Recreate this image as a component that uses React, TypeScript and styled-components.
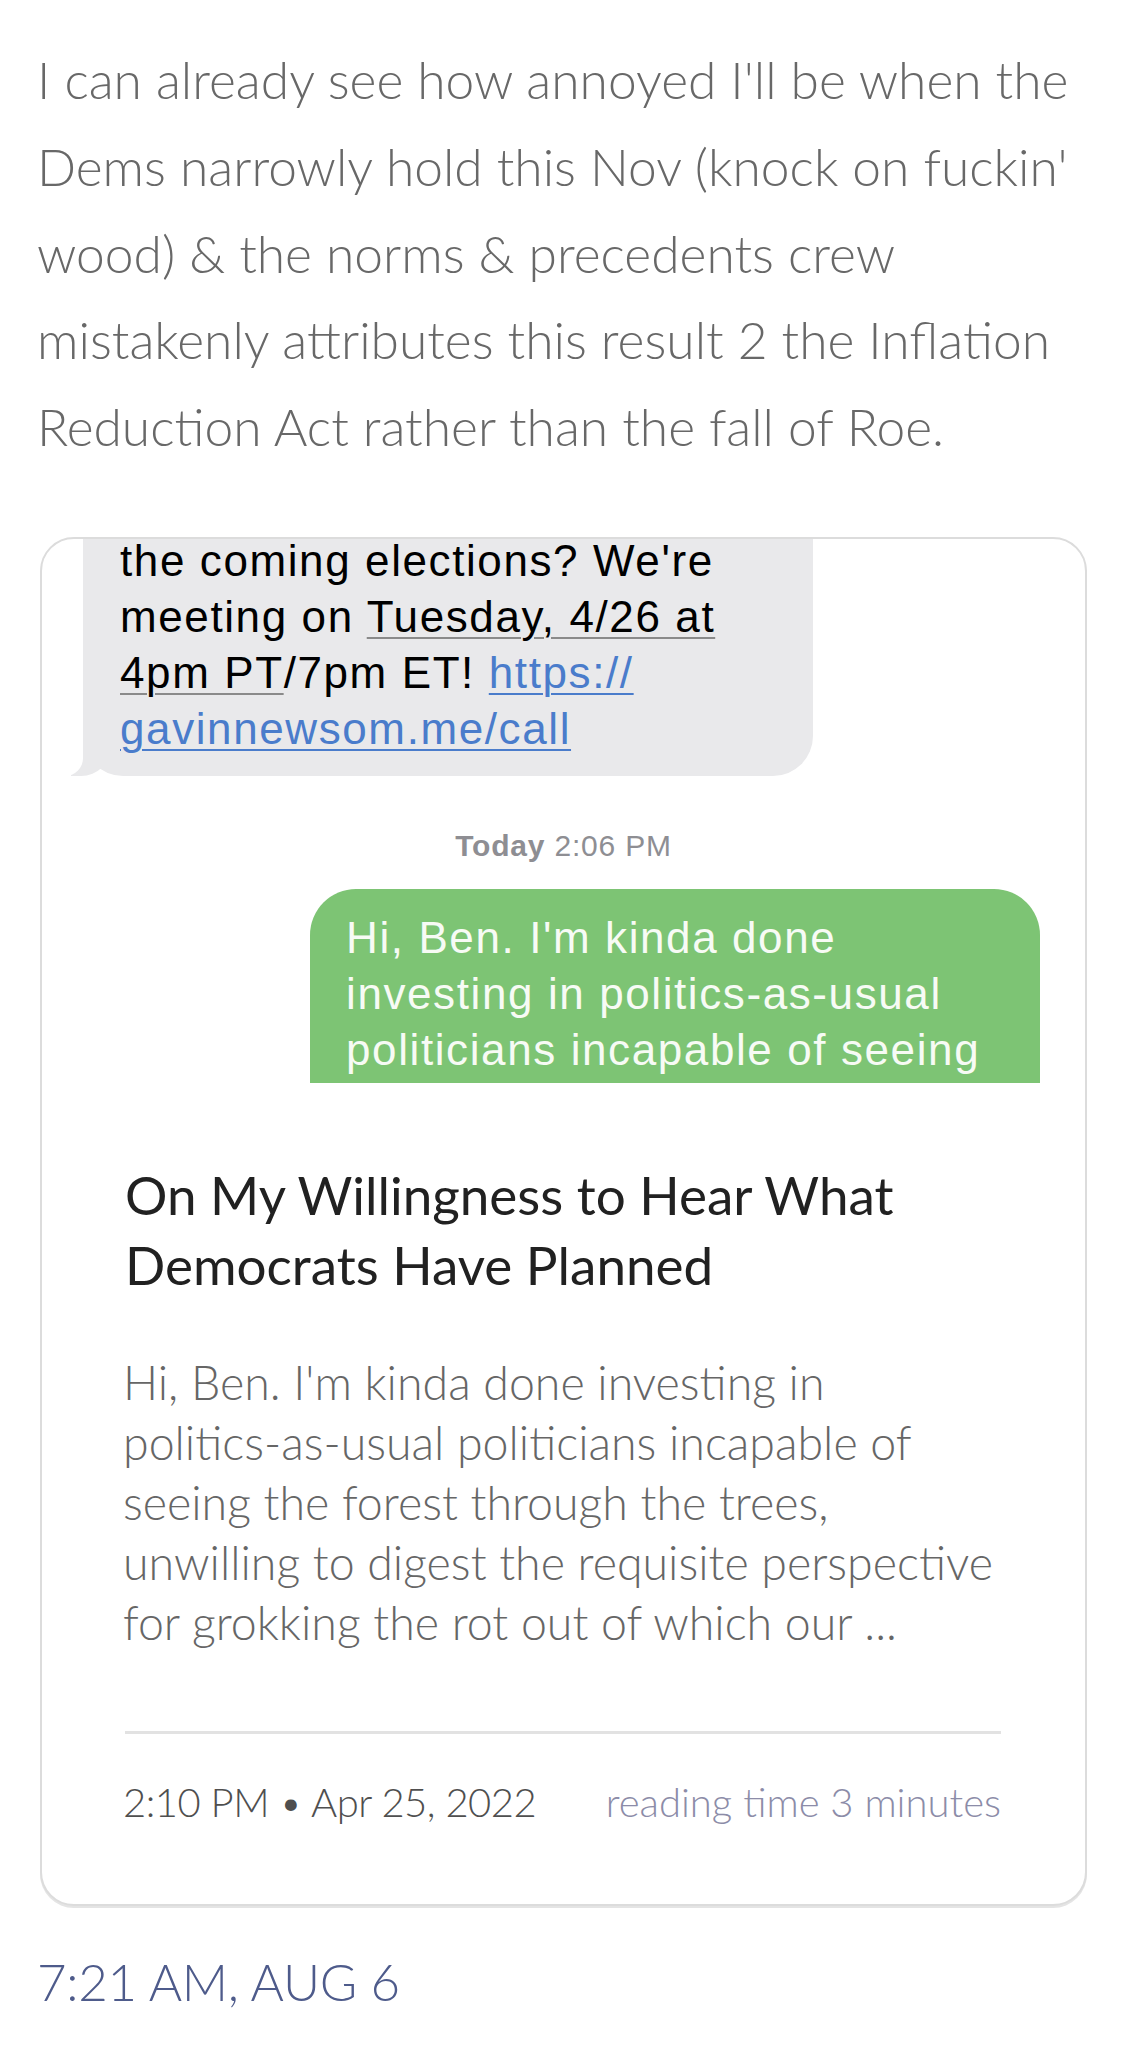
import React from "react";
import styled, { createGlobalStyle } from "styled-components";

const Global = createGlobalStyle`
  html, body { margin: 0; padding: 0; background: #ffffff; }
  * { box-sizing: border-box; }
`;

const Page = styled.main`
  width: 1125px;
  padding: 36px 38px 40px 40px;
  font-family: "Lato", "Liberation Sans", sans-serif;
`;

const Lead = styled.p`
  margin: 0 0 0 -3px;
  font-size: 51.5px;
  font-weight: 300;
  line-height: 86.75px;
  color: #686868;
  white-space: nowrap;
`;

const Card = styled.article`
  width: 1047px;
  margin-top: 67px;
  border: 2px solid #dcdcdc;
  border-radius: 34px;
  overflow: hidden;
  box-shadow: 0 2px 0 #e4e4e4;
  background: #ffffff;
`;

const Shot = styled.div`
  height: 544px;
  display: flex;
  flex-direction: column;
  overflow: hidden;
  font-family: "Liberation Sans", Arial, sans-serif;
`;

const Bubble = styled.div`
  position: relative;
  width: 730px;
  font-size: 44px;
  letter-spacing: 1.6px;
  line-height: 56px;
  white-space: nowrap;
`;

const Incoming = styled(Bubble)`
  align-self: flex-start;
  margin-left: 41px;
  height: 237px;
  padding: 0 0 20px 37px;
  background: #e9e9eb;
  color: #000000;
  border-radius: 0 0 40px 40px;

  &::before {
    content: "";
    position: absolute;
    bottom: 0;
    left: -12px;
    width: 40px;
    height: 40px;
    background: #e9e9eb;
    border-bottom-right-radius: 30px;
  }
  &::after {
    content: "";
    position: absolute;
    bottom: 0;
    left: -20px;
    width: 20px;
    height: 42px;
    background: #ffffff;
    border-bottom-right-radius: 18px;
  }
`;

const BubbleText = styled.div<{ $shift?: number }>`
  position: relative;
  z-index: 1;
  margin-top: ${(p) => p.$shift ?? 0}px;
`;

const Detected = styled.span`
  text-decoration: underline;
  text-decoration-color: #8a8a8a;
  text-decoration-thickness: 2px;
  text-underline-offset: 5px;
`;

const Link = styled.span`
  color: #4a7ccb;
  text-decoration: underline;
  text-decoration-thickness: 2px;
  text-underline-offset: 5px;
`;

const Stamp = styled.div`
  margin: 53px 0 26px;
  text-align: center;
  font-size: 30px;
  line-height: 34px;
  letter-spacing: 0.8px;
  color: #8e8e93;
  b { font-weight: 700; }
`;

const Outgoing = styled(Bubble)`
  align-self: flex-end;
  margin-right: 45px;
  flex: 1;
  padding: 21px 0 0 36px;
  background: #7dc474;
  color: #f7fbf5;
  border-radius: 46px 46px 0 0;
`;

const CardBody = styled.div`
  padding: 77px 84px 77px 83px;
`;

const Title = styled.h2`
  margin: 0;
  font-size: 53px;
  font-weight: 400;
  line-height: 70px;
  color: #212121;
  white-space: nowrap;
`;

const Excerpt = styled.p`
  margin: 52px 0 0 -2px;
  font-size: 46.5px;
  font-weight: 300;
  line-height: 60px;
  color: #666666;
  white-space: nowrap;
`;

const Divider = styled.hr`
  margin: 79px 0 0;
  border: 0;
  height: 3px;
  background: #e2e2e2;
`;

const Meta = styled.div`
  margin-top: 43px;
  display: flex;
  justify-content: space-between;
  align-items: baseline;
  font-size: 40px;
  font-weight: 300;
  line-height: 50px;
  white-space: nowrap;
`;

const Posted = styled.span`
  margin-left: -2px;
  letter-spacing: -0.5px;
  color: #4f4f4f;
`;

const ReadTime = styled.span`
  color: #8c8ca8;
`;

const Footer = styled.div`
  margin: 46px 0 0 -3px;
  font-size: 51px;
  font-weight: 300;
  letter-spacing: -0.3px;
  line-height: 60px;
  color: #4e5b8b;
`;

const leadLines = [
  "I can already see how annoyed I'll be when the",
  "Dems narrowly hold this Nov (knock on fuckin'",
  "wood) & the norms & precedents crew",
  "mistakenly attributes this result 2 the Inflation",
  "Reduction Act rather than the fall of Roe.",
];

const excerptLines = [
  "Hi, Ben. I'm kinda done investing in",
  "politics-as-usual politicians incapable of",
  "seeing the forest through the trees,",
  "unwilling to digest the requisite perspective",
  "for grokking the rot out of which our ...",
];

const outLines = [
  "Hi, Ben. I'm kinda done",
  "investing in politics-as-usual",
  "politicians incapable of seeing",
];

const Lines = ({ lines }: { lines: string[] }) => (
  <>
    {lines.map((l, i) => (
      <React.Fragment key={i}>
        {l}
        {i < lines.length - 1 && <br />}
      </React.Fragment>
    ))}
  </>
);

export default function App() {
  return (
    <>
      <Global />
      <Page>
        <Lead>
          <Lines lines={leadLines} />
        </Lead>
        <Card>
          <Shot>
            <Incoming>
              <BubbleText $shift={-6}>
                the coming elections? We're
                <br />
                meeting on <Detected>Tuesday, 4/26 at</Detected>
                <br />
                <Detected>4pm PT</Detected>/7pm ET! <Link>https://</Link>
                <br />
                <Link>gavinnewsom.me/call</Link>
              </BubbleText>
            </Incoming>
            <Stamp>
              <b>Today</b> 2:06 PM
            </Stamp>
            <Outgoing>
              <BubbleText>
                <Lines lines={outLines} />
              </BubbleText>
            </Outgoing>
          </Shot>
          <CardBody>
            <Title>
              On My Willingness to Hear What
              <br />
              Democrats Have Planned
            </Title>
            <Excerpt>
              <Lines lines={excerptLines} />
            </Excerpt>
            <Divider />
            <Meta>
              <Posted>2:10 PM • Apr 25, 2022</Posted>
              <ReadTime>reading time 3 minutes</ReadTime>
            </Meta>
          </CardBody>
        </Card>
        <Footer>7:21 AM, AUG 6</Footer>
      </Page>
    </>
  );
}
